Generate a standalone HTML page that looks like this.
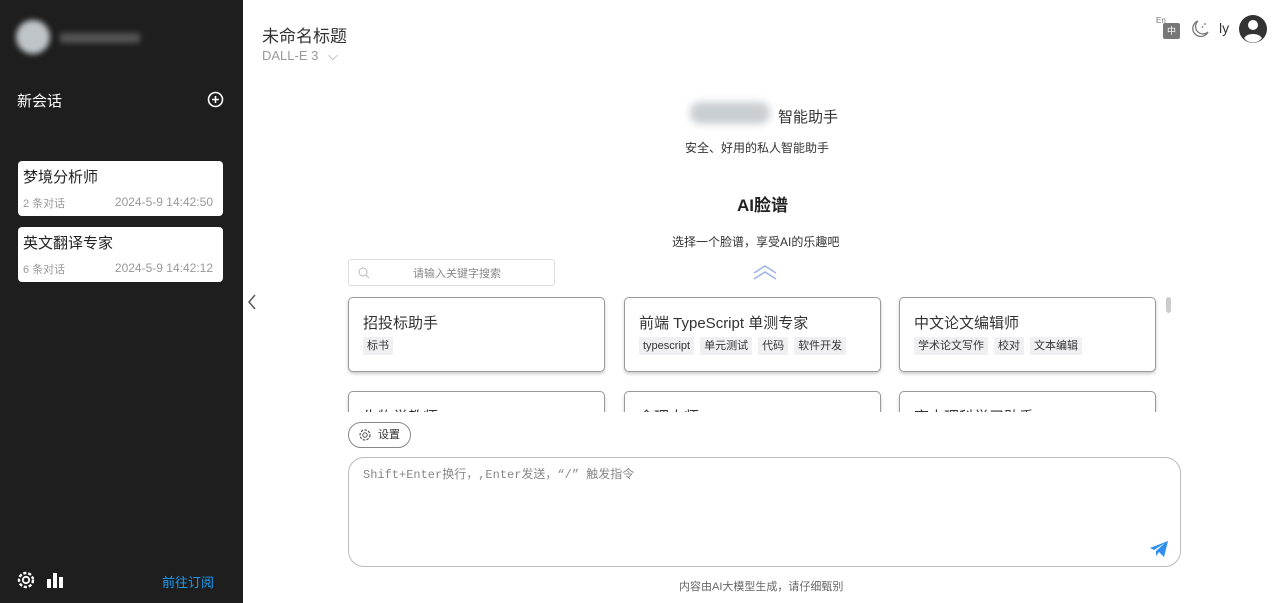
<!DOCTYPE html>
<html><head><meta charset="utf-8"><style>
*{box-sizing:border-box;margin:0;padding:0}
body{width:1280px;height:603px;overflow:hidden;background:#fff;font-family:"Liberation Sans","Noto Sans CJK SC",sans-serif;position:relative;color:#333}
.sb{position:absolute;left:0;top:0;width:243px;height:603px;background:#1e1e1e}
.abs{position:absolute}
.conv{position:absolute;left:18px;width:205px;height:55px;background:#fff;border-radius:4px}
.conv .t{position:absolute;left:5px;top:5px;font-size:15px;color:#222}
.conv .a{position:absolute;left:5px;top:34px;font-size:11px;color:#999}
.conv .d{position:absolute;right:10px;top:34px;font-size:12px;color:#999}
.card{position:absolute;width:257px;height:75px;border:1px solid #999;border-radius:5px;box-shadow:0 2px 3px rgba(0,0,0,.2);background:#fff}
.card .t{position:absolute;left:14px;top:14px;font-size:15px;color:#333}
.card .tags{position:absolute;left:14px;top:39px;display:flex;gap:6px;align-items:center}
.tag{background:#f0f0f2;font-size:11px;padding:2px 4px;color:#333;line-height:14px}
</style></head><body>
<div class="sb">
 <div class="abs" style="left:16px;top:20px;width:34px;height:34px;border-radius:50%;background:#bfc4c8;filter:blur(3px)"></div>
 <div class="abs" style="left:60px;top:33px;width:80px;height:10px;background:#555;filter:blur(3px)"></div>
 <div class="abs" style="left:17px;top:90px;font-size:15px;color:#fff">新会话</div>
 <svg class="abs" style="left:207px;top:91px" width="17" height="17" viewBox="0 0 17 17"><circle cx="8.5" cy="8.5" r="7" fill="none" stroke="#fff" stroke-width="1.6"/><path d="M8.5 5v7M5 8.5h7" stroke="#fff" stroke-width="1.6"/></svg>
 <div class="conv" style="top:161px"><div class="t">梦境分析师</div><div class="a">2 条对话</div><div class="d">2024-5-9 14:42:50</div></div>
 <div class="conv" style="top:227px"><div class="t">英文翻译专家</div><div class="a">6 条对话</div><div class="d">2024-5-9 14:42:12</div></div>
 <svg class="abs" style="left:16px;top:570px" width="20" height="20" viewBox="0 0 20 20"><circle cx="10" cy="10" r="7" fill="none" stroke="#fff" stroke-width="2.4" stroke-dasharray="3.2 1.8"/><circle cx="10" cy="10" r="3.2" fill="none" stroke="#fff" stroke-width="1.8"/></svg>
 <svg class="abs" style="left:46px;top:572px" width="18" height="16" viewBox="0 0 18 16"><rect x="1" y="7" width="4" height="9" fill="#fff"/><rect x="7" y="1" width="4" height="15" fill="#fff"/><rect x="13" y="5" width="4" height="11" fill="#fff"/></svg>
 <div class="abs" style="left:162px;top:572px;font-size:13px;color:#1e9bf0">前往订阅</div>
</div>
<div class="abs" style="left:262px;top:22px;font-size:17px;color:#333">未命名标题</div>
<div class="abs" style="left:262px;top:48px;font-size:13px;color:#999">DALL-E 3 <span style="margin-left:6px">⌵</span></div>
<div class="abs" style="left:1156px;top:16px;font-size:8px;color:#777">En</div>
<div class="abs" style="left:1163px;top:23px;width:17px;height:16px;background:#777;border-radius:2px;color:#fff;font-size:9px;text-align:center;line-height:16px">中</div>
<svg class="abs" style="left:1190px;top:19px" width="20" height="20" viewBox="0 0 20 20"><path d="M8 2a8 8 0 1 0 10 11A7 7 0 0 1 8 2z" fill="none" stroke="#777" stroke-width="1.3"/><circle cx="15" cy="5" r=".9" fill="#777"/><circle cx="12.5" cy="8" r=".9" fill="#777"/></svg>
<div class="abs" style="left:1219px;top:20px;font-size:14px;color:#333">ly</div>
<svg class="abs" style="left:1238px;top:14px" width="30" height="30" viewBox="0 0 30 30"><circle cx="15" cy="15" r="14" fill="#333"/><circle cx="15" cy="11" r="5" fill="#fff"/><path d="M6 24a10 7 0 0 1 18 0a11 11 0 0 1-18 0z" fill="#fff"/></svg>
<div class="abs" style="left:690px;top:102px;width:80px;height:22px;background:#c9ced2;border-radius:10px;filter:blur(4px)"></div>
<div class="abs" style="left:778px;top:106px;font-size:15px;color:#333">智能助手</div>
<div class="abs" style="left:685px;top:139px;font-size:12px;color:#333">安全、好用的私人智能助手</div>
<div class="abs" style="left:737px;top:191px;font-size:17px;font-weight:bold;color:#222">AI脸谱</div>
<div class="abs" style="left:672px;top:233px;font-size:12px;color:#333">选择一个脸谱，享受AI的乐趣吧</div>
<div class="abs" style="left:348px;top:259px;width:207px;height:27px;border:1px solid #ddd;border-radius:3px"><svg class="abs" style="left:9px;top:7px" width="12" height="12" viewBox="0 0 12 12"><circle cx="5" cy="5" r="4" fill="none" stroke="#bbb"/><path d="M8 8l3 3" stroke="#bbb"/></svg><span class="abs" style="left:64px;top:5px;font-size:11px;color:#888">请输入关键字搜索</span></div>
<svg class="abs" style="left:752px;top:264px" width="26" height="16" viewBox="0 0 26 16"><path d="M2 9l11-7 11 7M2 15l11-7 11 7" fill="none" stroke="#9ab4e8" stroke-width="1.5"/></svg>
<svg class="abs" style="left:246px;top:293px" width="12" height="18" viewBox="0 0 12 18"><path d="M9 2L3 9l6 7" fill="none" stroke="#555" stroke-width="1.5"/></svg>
<div style="position:absolute;left:0;top:0;width:1280px;height:412px;overflow:hidden">
<div class="card" style="left:348px;top:297px"><div class="t">招投标助手</div><div class="tags"><span class="tag">标书</span></div></div>
<div class="card" style="left:624px;top:297px"><div class="t">前端 TypeScript 单测专家</div><div class="tags"><span class="tag">typescript</span><span class="tag">单元测试</span><span class="tag">代码</span><span class="tag">软件开发</span></div></div>
<div class="card" style="left:899px;top:297px"><div class="t">中文论文编辑师</div><div class="tags"><span class="tag">学术论文写作</span><span class="tag">校对</span><span class="tag">文本编辑</span></div></div>
<div class="card" style="left:348px;top:391px"><div class="t">生物学教师</div></div>
<div class="card" style="left:624px;top:391px"><div class="t">命理大师</div></div>
<div class="card" style="left:899px;top:391px"><div class="t">高中理科学习助手</div></div>
</div>
<div class="abs" style="left:1166px;top:297px;width:5px;height:16px;background:#ccc;border-radius:3px"></div>
<div class="abs" style="left:348px;top:422px;width:63px;height:26px;border:1px solid #888;border-radius:13px;font-size:11px;line-height:24px;padding-left:29px;color:#333">设置<svg class="abs" style="left:9px;top:5px" width="14" height="14" viewBox="0 0 14 14"><circle cx="7" cy="7" r="5" fill="none" stroke="#555" stroke-width="1.2" stroke-dasharray="2.5 1.3"/><circle cx="7" cy="7" r="2.2" fill="none" stroke="#555"/></svg></div>
<div class="abs" style="left:348px;top:457px;width:833px;height:110px;border:1px solid #bbb;border-radius:16px"><span class="abs" style="left:14px;top:7px;font-size:12px;color:#888;font-family:'Liberation Mono','Noto Sans CJK SC',monospace">Shift+Enter换行，,Enter发送，“/” 触发指令</span>
<svg class="abs" style="left:800px;top:82px" width="20" height="18" viewBox="0 0 20 18"><path d="M1 8L19 1l-4 16-5-5-3 4v-5l9-8-11 7z" fill="#2f8ef0"/></svg></div>
<div class="abs" style="left:679px;top:578px;font-size:11px;color:#666">内容由AI大模型生成，请仔细甄别</div>
</body></html>
